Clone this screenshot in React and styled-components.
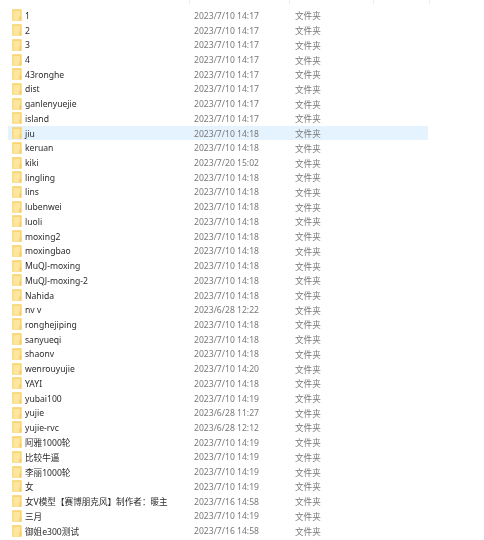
import styled, { createGlobalStyle } from 'styled-components';

const GlobalStyle = createGlobalStyle`
    html, body {
        margin: 0;
        padding: 0;
        background: #ffffff;
    }
`;

const Page = styled.div`
    width: 484px;
    height: 540px;
    overflow: hidden;
    font-family: "Noto Sans", "Noto Sans CJK SC", sans-serif;
    font-size: 8.6px;
    filter: blur(0.3px);
`;

const HeaderBar = styled.div`
    display: grid;
    grid-template-columns: 189.5px 100.5px 84px 56px;
    height: 4px;
    margin-bottom: 4px;
`;

const HeaderCell = styled.div`
    border-right: 1px solid #ececec;
`;

const List = styled.div`
    display: flex;
    flex-direction: column;
    width: 420px;
    margin-left: 8px;
`;

const Row = styled.div`
    display: grid;
    grid-template-columns: 17px 169px 101px 1fr;
    align-items: center;
    height: 14.73px;
    background: ${(props) => (props.$active ? '#e5f3ff' : 'transparent')};
`;

const FolderIcon = styled.svg`
    width: 10px;
    height: 12px;
    margin-left: 4px;
`;

const Name = styled.span`
    color: #2b2b2b;
    white-space: nowrap;
    padding-top: 1px;
`;

const Muted = styled.span`
    color: #787878;
    white-space: nowrap;
    padding-top: 1px;
`;

const d = (day, time) => `2023/${day} ${time}`;

const rows = [
    ['1', d('7/10', '14:17')],
    ['2', d('7/10', '14:17')],
    ['3', d('7/10', '14:17')],
    ['4', d('7/10', '14:17')],
    ['43ronghe', d('7/10', '14:17')],
    ['dist', d('7/10', '14:17')],
    ['ganlenyuejie', d('7/10', '14:17')],
    ['island', d('7/10', '14:17')],
    ['jiu', d('7/10', '14:18')],
    ['keruan', d('7/10', '14:18')],
    ['kiki', d('7/20', '15:02')],
    ['lingling', d('7/10', '14:18')],
    ['lins', d('7/10', '14:18')],
    ['lubenwei', d('7/10', '14:18')],
    ['luoli', d('7/10', '14:18')],
    ['moxing2', d('7/10', '14:18')],
    ['moxingbao', d('7/10', '14:18')],
    ['MuQJ-moxing', d('7/10', '14:18')],
    ['MuQJ-moxing-2', d('7/10', '14:18')],
    ['Nahida', d('7/10', '14:18')],
    ['nv v', d('6/28', '12:22')],
    ['ronghejiping', d('7/10', '14:18')],
    ['sanyueqi', d('7/10', '14:18')],
    ['shaonv', d('7/10', '14:18')],
    ['wenrouyujie', d('7/10', '14:20')],
    ['YAYI', d('7/10', '14:18')],
    ['yubai100', d('7/10', '14:19')],
    ['yujie', d('6/28', '11:27')],
    ['yujie-rvc', d('6/28', '12:12')],
    ['阿雅1000轮', d('7/10', '14:19')],
    ['比较牛逼', d('7/10', '14:19')],
    ['李丽1000轮', d('7/10', '14:19')],
    ['女', d('7/10', '14:19')],
    ['女V模型【赛博朋克风】制作者：暖主', d('7/16', '14:58')],
    ['三月', d('7/10', '14:19')],
    ['御姐e300测试', d('7/16', '14:58')],
];

function Folder() {
    return (
        <FolderIcon viewBox="0 0 10 12">
            <path d="M0.5 0.5h8.8v11h-8.8z" fill="#fad672" stroke="#f8d06a" strokeWidth="0.6" />
            <path d="M1.5 2h6.5v9.5h-6.5z" fill="#fde7a0" />
            <path d="M7 7.5h2.5v4h-2.5z" fill="#f8d272" />
        </FolderIcon>
    );
}

export default function App() {
    return (
        <Page>
            <GlobalStyle />
            <HeaderBar>
                <HeaderCell />
                <HeaderCell />
                <HeaderCell />
                <HeaderCell />
            </HeaderBar>
            <List>
                {rows.map(([name, date]) => (
                    <Row key={name} $active={name === 'jiu'}>
                        <Folder />
                        <Name>{name}</Name>
                        <Muted>{date}</Muted>
                        <Muted>文件夹</Muted>
                    </Row>
                ))}
            </List>
        </Page>
    );
}
